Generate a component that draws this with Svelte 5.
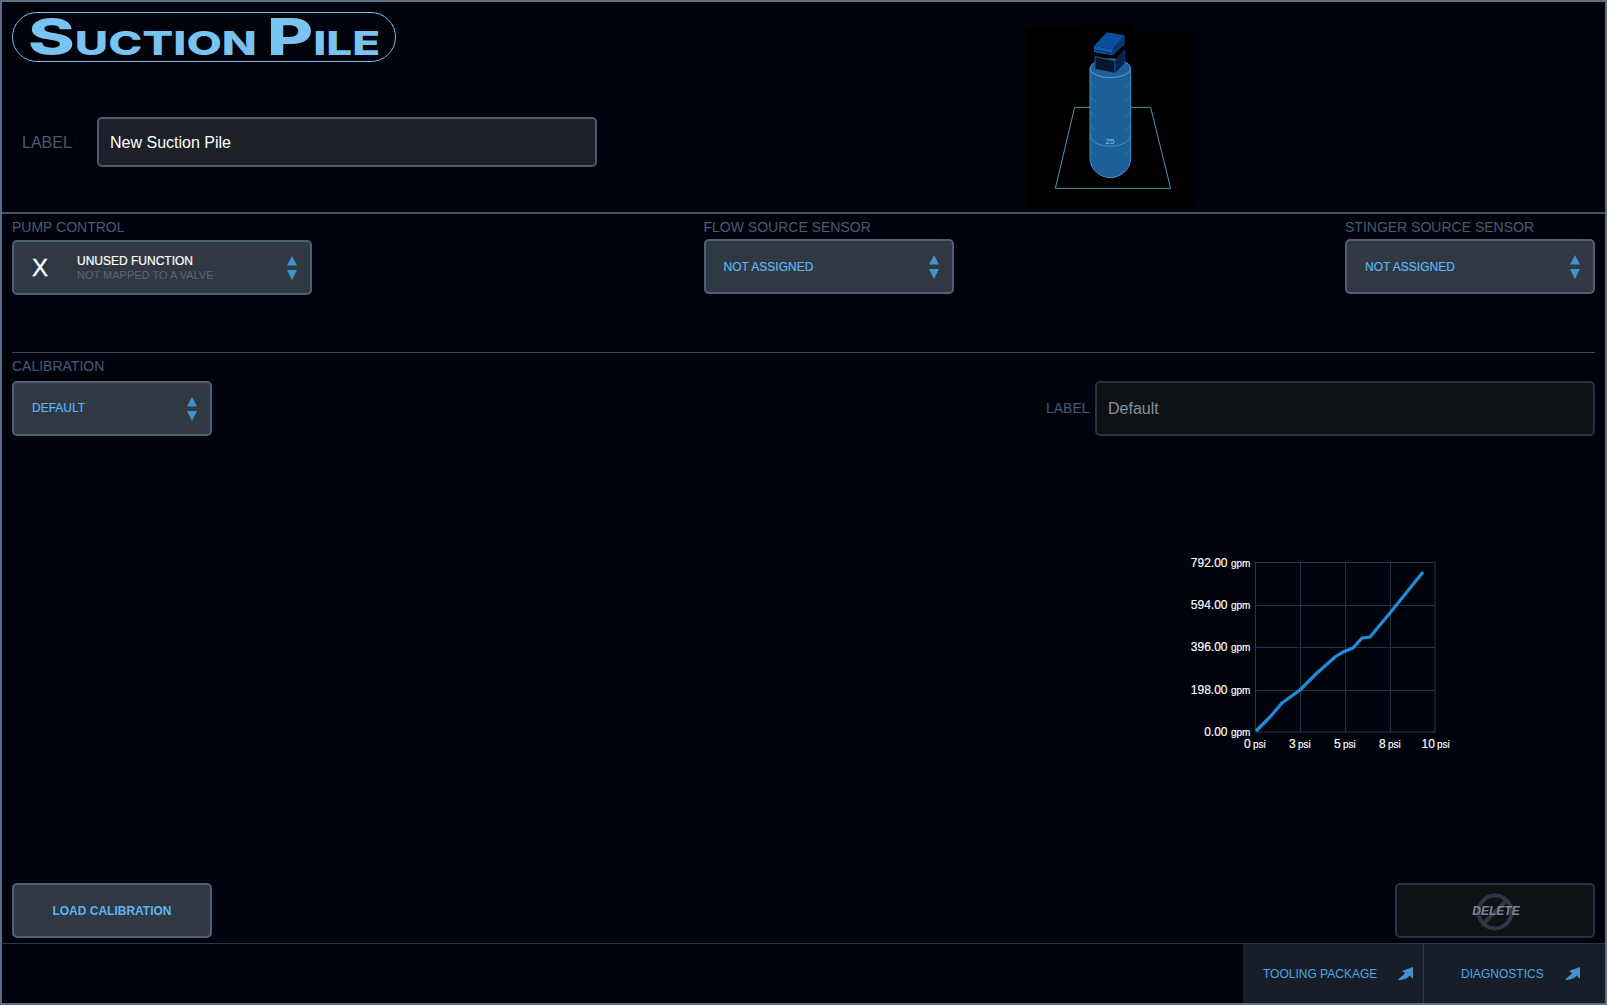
<script>
  const yLabels = [
    { value: '792.00', y: 567 },
    { value: '594.00', y: 609 },
    { value: '396.00', y: 651 },
    { value: '198.00', y: 694 },
    { value: '0.00', y: 736 }
  ];
  const xLabels = [
    { value: '0', x: 1244, unit: 1253 },
    { value: '3', x: 1289, unit: 1298 },
    { value: '5', x: 1334, unit: 1343 },
    { value: '8', x: 1379, unit: 1388 },
    { value: '10', x: 1421.500, unit: 1437 }
  ];
  const gridX = [1300, 1345, 1390];
  const gridY = [605, 647, 690];
  const curve = '1256,731 1270,717 1282,703 1300,690 1317,673 1335,657 1343,652 1353,648 1362,638 1370,637 1390,613 1423,572';
</script>

{#snippet arrows()}
  <svg class="arrows" viewBox="0 0 10 24" aria-hidden="true">
    <path d="M5 0 L10 9.500 L0 9.500 Z"></path>
    <path d="M0 14 L10 14 L5 24 Z"></path>
  </svg>
{/snippet}

{#snippet jump()}
  <svg class="jump" viewBox="0 0 15 13" aria-hidden="true">
    <path d="M0 13 C2 10 5 9 7 6 L4 4 L15 0 L15 12 L11.500 8.500 C9 12 5 13 0 13 Z"></path>
  </svg>
{/snippet}

<div class="app">
  <header class="top">
    <div class="top-left">
      <div class="logo">
        <h1><span class="cap">S</span>UCTION <span class="cap">P</span>ILE</h1>
      </div>
      <div class="name-row">
        <span class="name-label">LABEL</span>
        <div class="text-input">New Suction Pile</div>
      </div>
    </div>
    <svg class="model" viewBox="0 0 600 615" aria-hidden="true">
      <rect x="48" y="52" width="177" height="538" fill="#000"></rect>
      <rect x="225" y="40" width="147" height="550" fill="#000"></rect>
      <rect x="372" y="68" width="186" height="522" fill="#000"></rect>
      <path d="M194 292 H422 L482 535 H136 Z" fill="none" stroke="#4f96ad" stroke-width="3"></path>
      <path d="M240 175 A61 28 0 0 1 362 175 V445 C362 480 330 503 301 503 C272 503 240 480 240 445 Z" fill="#1d5f97" stroke="#3f93cf" stroke-width="3"></path>
      <path d="M240 175 A61 28 0 0 0 362 175" fill="none" stroke="#4fa3dc" stroke-width="3"></path>
      <path d="M240 375 A61 34 0 0 0 362 375" fill="none" stroke="#4fa3dc" stroke-width="2"></path>
      <path d="M240 215 l17 17 M362 215 l-17 17 M240 260 l17 17 M362 260 l-17 17 M240 305 l17 17 M362 305 l-17 17 M240 345 l17 17 M362 345 l-17 17 M240 420 l17 17 M362 420 l-17 17" stroke="#3f86bd" stroke-width="2"></path>
      <text x="300" y="402" class="model-num">25</text>
      <path d="M255 140 L315 152 V190 L255 178 Z" fill="#04162e" stroke="#1d5f97" stroke-width="3"></path>
      <path d="M315 152 L344 120 V160 L315 190 Z" fill="#062447" stroke="#0f4f8f" stroke-width="2"></path>
      <path d="M252 108 L290 67 L344 76 L308 118 Z" fill="#0a4f9a"></path>
      <path d="M252 108 L308 118 V136 L252 126 Z" fill="#0d5cb0"></path>
      <path d="M308 118 L344 76 V104 L308 136 Z" fill="#063a75"></path>
      <path d="M255 120 L305 130" stroke="#03244a" stroke-width="3"></path>
    </svg>
  </header>

  <section class="sensors">
    <div class="field pump">
      <span class="field-label">PUMP CONTROL</span>
      <div class="select pump-select">
        <span class="pump-x">X</span>
        <div class="pump-text">
          <span class="pump-name">UNUSED FUNCTION</span>
          <span class="pump-sub">NOT MAPPED TO A VALVE</span>
        </div>
        {@render arrows()}
      </div>
    </div>
    <div class="field sensor">
      <span class="field-label">FLOW SOURCE SENSOR</span>
      <div class="select">
        <span class="select-value">NOT ASSIGNED</span>
        {@render arrows()}
      </div>
    </div>
    <div class="field sensor">
      <span class="field-label">STINGER SOURCE SENSOR</span>
      <div class="select">
        <span class="select-value">NOT ASSIGNED</span>
        {@render arrows()}
      </div>
    </div>
  </section>

  <section class="calibration">
    <span class="field-label">CALIBRATION</span>
    <div class="cal-row">
      <div class="select cal-select">
        <span class="select-value">DEFAULT</span>
        {@render arrows()}
      </div>
      <div class="cal-name">
        <span class="cal-label">LABEL</span>
        <div class="text-input disabled">Default</div>
      </div>
    </div>

    <svg class="chart" viewBox="1170 545 290 220" aria-label="Calibration curve">
      {#each gridX as x}
        <line x1={x + 0.5} x2={x + 0.5} y1="562.500" y2="732" class="grid"></line>
      {/each}
      {#each gridY as y}
        <line x1="1256" x2="1435" y1={y + 0.5} y2={y + 0.5} class="grid"></line>
      {/each}
      <rect x="1255.500" y="562.500" width="179.500" height="169.500" class="plot"></rect>
      <polyline points={curve} class="curve"></polyline>
      {#each yLabels as l}
        <text x="1227.500" y={l.y} text-anchor="end" class="tick">{l.value}</text>
        <text x="1231" y={l.y} class="unit">gpm</text>
      {/each}
      {#each xLabels as l}
        <text x={l.x} y="748" class="tick">{l.value}</text>
        <text x={l.unit} y="748" class="unit">psi</text>
      {/each}
    </svg>

    <div class="actions">
      <button class="action load">LOAD CALIBRATION</button>
      <button class="action remove">
        <svg class="no-sign" viewBox="0 0 38 38" aria-hidden="true">
          <circle cx="19" cy="19" r="16.500"></circle>
          <line x1="31" y1="7" x2="7" y2="31"></line>
        </svg>
        <span>DELETE</span>
      </button>
    </div>
  </section>

  <footer class="bottom">
    <button class="tab tooling">TOOLING PACKAGE {@render jump()}</button>
    <button class="tab diagnostics">DIAGNOSTICS {@render jump()}</button>
  </footer>
</div>

<style>
  :global(body) {
    margin: 0;
    background: #00020c;
  }

  .app {
    width: 1607px;
    height: 1005px;
    box-sizing: border-box;
    border: 2px solid #5b6d87;
    background: #00020c;
    display: flex;
    flex-direction: column;
    font-family: "Liberation Sans", Arial, sans-serif;
    overflow: hidden;
  }

  .top {
    height: 212px;
    box-sizing: border-box;
    border-bottom: 2px solid #45546a;
    display: flex;
    flex-shrink: 0;
  }

  .top-left {
    width: 1008px;
    padding: 10px 0 0 10px;
    box-sizing: border-box;
  }

  .logo {
    width: 384px;
    height: 50px;
    box-sizing: border-box;
    border: 1px solid #78c3ef;
    border-radius: 25px;
    padding-left: 15px;
  }

  .logo h1 {
    margin: 0;
    color: #78c3ef;
    font-family: Inter, sans-serif;
    font-weight: 800;
    font-size: 33px;
    line-height: 48px;
    white-space: nowrap;
    transform: scaleX(1.39);
    transform-origin: left center;
  }

  .logo .cap {
    font-size: 51px;
  }

  .name-row {
    display: flex;
    align-items: center;
    margin-top: 55px;
  }

  .name-label {
    width: 85px;
    padding: 1px 0 0 10px;
    box-sizing: border-box;
    color: #4a5a72;
    font-size: 16px;
  }

  .text-input {
    flex: 1;
    box-sizing: border-box;
    border: 2px solid #4c5b72;
    border-radius: 5px;
    background: #1c2028;
    color: #fff;
    font-size: 16px;
    display: flex;
    align-items: center;
    padding-left: 11px;
  }

  .name-row .text-input {
    flex: none;
    width: 500px;
    height: 50px;
    padding-top: 1px;
  }

  .text-input.disabled {
    height: 55px;
    background: #0f1215;
    border-color: #2b323d;
    color: #8a8f9e;
  }

  .model {
    width: 200px;
    height: 205px;
    margin-top: 8px;
  }

  .model-num {
    fill: #8cc4ea;
    font-size: 24px;
    text-anchor: middle;
  }

  .sensors {
    height: 139px;
    box-sizing: border-box;
    margin: 0 10px;
    border-bottom: 1px solid #3a4658;
    display: flex;
    justify-content: space-between;
    flex-shrink: 0;
    padding-top: 5px;
  }

  .field {
    display: flex;
    flex-direction: column;
  }

  .pump {
    width: 300px;
  }

  .sensor {
    width: 250px;
  }

  .field-label {
    color: #4a5a72;
    font-size: 14px;
    line-height: 16px;
    height: 20px;
  }

  .select {
    height: 55px;
    box-sizing: border-box;
    border: 2px solid #4f5f77;
    border-radius: 5px;
    background: #303842;
    display: flex;
    align-items: center;
    padding: 0 13px 0 18px;
  }

  .pump-select {
    margin-top: 1px;
  }

  .select-value {
    flex: 1;
    color: #5db4f5;
    font-size: 12px;
    line-height: 14px;
    -webkit-text-stroke: 0.2px #5db4f5;
  }

  .cal-select .select-value {
    margin-bottom: 1px;
  }

  .arrows {
    width: 10px;
    height: 24px;
    flex-shrink: 0;
  }

  .arrows path {
    fill: #3f93cf;
  }

  .pump-x {
    width: 45px;
    color: #fff;
    font-size: 24px;
    -webkit-text-stroke: 0.3px #fff;
  }

  .pump-text {
    flex: 1;
    display: flex;
    flex-direction: column;
  }

  .pump-name {
    color: #fff;
    font-size: 12px;
    line-height: 14px;
    -webkit-text-stroke: 0.2px #fff;
  }

  .pump-sub {
    color: #5a6679;
    font-size: 11px;
    line-height: 14px;
  }

  .calibration {
    flex: 1;
    margin: 0 10px;
    display: flex;
    flex-direction: column;
    padding-top: 5px;
    box-sizing: border-box;
    border-bottom: 1px solid transparent;
  }

  .cal-row {
    display: flex;
    justify-content: space-between;
    margin-top: 3px;
  }

  .cal-select {
    width: 200px;
  }

  .cal-name {
    display: flex;
    align-items: center;
    width: 549px;
  }

  .cal-label {
    width: 49px;
    color: #4a5a72;
    font-size: 14px;
    margin-bottom: 1px;
  }

  .chart {
    width: 290px;
    height: 220px;
    align-self: flex-end;
    margin: 109px 135px 0 0;
  }

  .grid {
    stroke: #263241;
    stroke-width: 1;
  }

  .plot {
    fill: none;
    stroke: #2a3644;
    stroke-width: 1;
  }

  .curve {
    fill: none;
    stroke: #1c8fdb;
    stroke-width: 3.200;
    stroke-linejoin: round;
  }

  .tick {
    fill: #fff;
    font-size: 12px;
    stroke: #fff;
    stroke-width: 0.150;
  }

  .unit {
    fill: #fff;
    font-size: 10px;
    stroke: #fff;
    stroke-width: 0.150;
  }

  .actions {
    display: flex;
    justify-content: space-between;
    margin-top: auto;
    margin-bottom: 4px;
  }

  button {
    font-family: inherit;
    cursor: pointer;
  }

  .action {
    width: 200px;
    height: 55px;
    box-sizing: border-box;
    border-radius: 5px;
    font-size: 12px;
    font-weight: 700;
    display: flex;
    align-items: center;
    justify-content: center;
    position: relative;
  }

  .load {
    border: 2px solid #4f5f77;
    background: #303842;
    color: #5db4f5;
  }

  .remove {
    border: 2px solid #2b323d;
    background: #0f1215;
    color: #7f8599;
    font-style: italic;
  }

  .remove span {
    position: relative;
    left: 1px;
  }

  .no-sign {
    position: absolute;
    left: 79px;
    top: 8px;
    width: 38px;
    height: 38px;
  }

  .no-sign circle,
  .no-sign line {
    fill: none;
    stroke: #2f3644;
    stroke-width: 4;
  }

  .bottom {
    height: 60px;
    box-sizing: border-box;
    border-top: 1px solid #2e3745;
    display: flex;
    justify-content: flex-end;
    flex-shrink: 0;
  }

  .tab {
    height: 100%;
    border: none;
    background: #181e29;
    color: #4aa6e8;
    font-size: 12px;
    display: flex;
    align-items: center;
    justify-content: space-between;
    box-sizing: border-box;
  }

  .tooling {
    width: 181px;
    padding: 0 10px 0 20px;
    border-right: 1px solid #2e3745;
  }

  .diagnostics {
    width: 181px;
    padding: 0 25px 0 37px;
  }

  .jump {
    width: 15px;
    height: 13px;
  }

  .jump path {
    fill: #3f93cf;
  }
</style>
